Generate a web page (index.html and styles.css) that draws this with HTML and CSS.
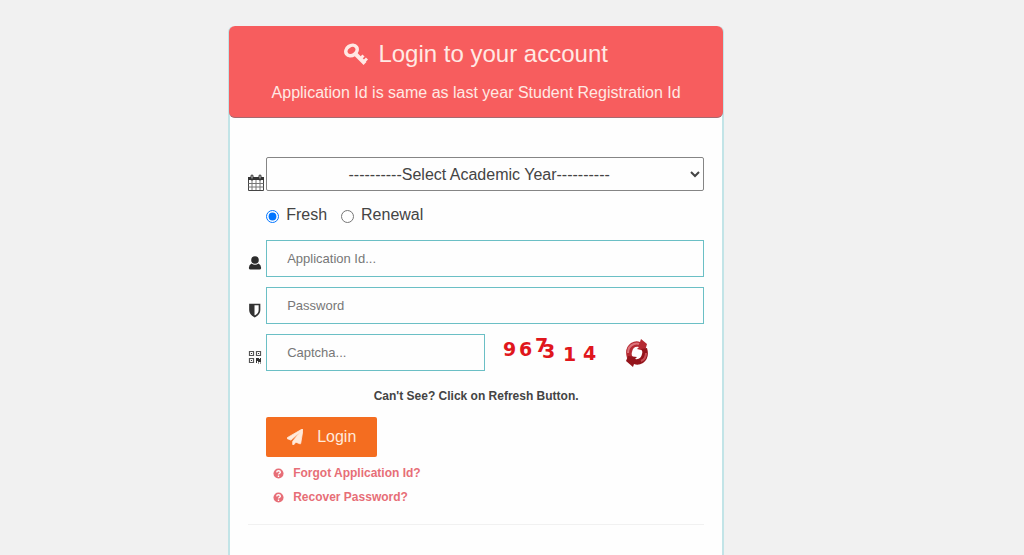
FILE: index.html
```html
<!DOCTYPE html>
<html lang="en">
<head>
<meta charset="utf-8">
<meta name="viewport" content="width=device-width, initial-scale=1">
<title>Login to your account</title>
<link rel="stylesheet" href="styles.css">
</head>
<body>
<main class="page">
  <section class="card">
    <header class="card-head">
      <h1 class="title">
        <svg class="icon-key" viewBox="0 0 24 22" aria-hidden="true"><g fill="none" stroke="currentColor"><ellipse cx="7.5" cy="7.5" rx="6" ry="4.800" stroke-width="3.600" transform="rotate(-35 7.5 7.5)"/><path d="M11 10.500L21 20.500" stroke-width="4"/><path d="M16 16L19.500 12.500M19.500 19L23 15.500" stroke-width="3"/></g></svg>
        Login to your account
      </h1>
      <p class="subtitle">Application Id is same as last year Student Registration Id</p>
    </header>
    <form class="form">
      <div class="row">
        <svg class="icon-calendar" viewBox="0 0 16 17" aria-hidden="true"><path d="M.5 3.500h15V16.500H.5z" fill="#fff" stroke="#444"/><path d="M0 3h16v3H0z" fill="#333"/><path d="M.5 9.500h15M.5 13h15M4 6v10M8 6v10M12 6v10" stroke="#777" fill="none"/><path d="M4 2v3M12 2v3" stroke="#333" stroke-width="3" stroke-linecap="round"/><path d="M4 1.500v3M12 1.500v3" stroke="#ccc"/></svg>
        <select class="select" aria-label="Academic year"><option>----------Select Academic Year----------</option></select>
      </div>
      <div class="radios">
        <label class="radio"><input type="radio" name="kind" checked>Fresh</label>
        <label class="radio"><input type="radio" name="kind">Renewal</label>
      </div>
      <div class="row">
        <svg class="icon" viewBox="0 0 14 16" aria-hidden="true"><circle cx="7" cy="5" r="3.800" fill="#2c2c2c"/><path d="M3.500 8.500Q7 11 10.500 8.500Q13 9.500 13.200 13Q13 14.500 11.500 14.500H2.500Q1 14.500 .8 13Q1 9.500 3.500 8.500z" fill="#2c2c2c"/></svg>
        <input class="field" type="text" aria-label="Application Id" placeholder="Application Id...">
      </div>
      <div class="row">
        <svg class="icon" viewBox="0 0 14 16" aria-hidden="true"><path d="M2 2.500H11.500V8Q11.500 12 6.750 14.500Q2 12 2 8z" fill="#fff" stroke="#333" stroke-width="1.700"/><path d="M2 2.500H6.500V14.500Q2 12 2 8z" fill="#333"/></svg>
        <input class="field" type="password" aria-label="Password" placeholder="Password">
      </div>
      <div class="row">
        <svg class="icon" viewBox="0 0 14 16" aria-hidden="true"><path d="M1.500 2.500h4v4h-4zM8.500 2.500h4v4h-4zM1.500 9.500h4v4h-4z" fill="#fff" stroke="#555" stroke-width="1.200"/><path d="M3 4h1v1H3zM10 4h1v1h-1zM3 11h1v1H3zM8 9h3v1h1V9h1v4h-3v-1H9v2H8zM10 13.500h1v1h-1zM12 13.500h1v1h-1z" fill="#333"/></svg>
        <div class="captcha">
          <input class="field" type="text" aria-label="Captcha" placeholder="Captcha...">
          <svg class="digits" viewBox="0 0 96 30" role="img" aria-label="Captcha code"><text x="0" y="18">9</text><text x="16" y="18">6</text><text x="32" y="14">7</text><text x="39" y="20">3</text><text x="60" y="23">1</text><text x="80" y="22">4</text></svg>
          <button class="refresh" type="button" aria-label="Refresh captcha">
            <svg viewBox="0 0 24 28" aria-hidden="true"><path d="M2 19Q-1 9 6 4Q11 1 15 3L16 0L22 5L20 12L12 10L14 8Q8 7 7 13Q6 16 8 18Z" fill="#b52a32"/><path d="M22 9Q25 19 18 24Q13 27 9 25L8 28L1 22L3 17L12 18L10 20Q16 21 17 15Q18 12 16 10Z" fill="#94141b"/><path d="M3 14Q3 7 9 5Q12 4 14 5" fill="none" stroke="#dc747b" stroke-width="2"/><path d="M21 14Q21 20 16 22" fill="none" stroke="#c94e56" stroke-width="2"/></svg>
          </button>
        </div>
      </div>
      <p class="hint">Can't See? Click on Refresh Button.</p>
      <button class="login" type="submit">
        <svg class="icon-plane" viewBox="0 0 1792 1792" aria-hidden="true"><path fill="currentColor" stroke="currentColor" stroke-width="90" d="M1764 11q33 24 27 64l-256 1536q-5 29-32 45-14 8-31 8-11 0-24-5l-453-185-242 295q-18 23-49 23-13 0-22-4-19-7-30.500-23.500t-11.500-36.500v-349l864-1059-1069 925-395-162q-37-14-40-55-2-40 32-59l1664-960q15-9 32-9 20 0 36 11z"/></svg>
        Login
      </button>
      <nav class="links">
        <a class="link" href="#"><svg class="icon-help" viewBox="0 0 12 12" aria-hidden="true"><circle cx="6" cy="6" r="5.500" fill="currentColor"/><path d="M4 4.700Q4.200 3 6 3Q8 3 8 4.600Q8 5.400 6.900 6Q6 6.500 6 7.200M6 8.200V9.700" fill="none" stroke="#fff" stroke-width="1.500"/></svg>Forgot Application Id?</a>
        <a class="link" href="#"><svg class="icon-help" viewBox="0 0 12 12" aria-hidden="true"><circle cx="6" cy="6" r="5.500" fill="currentColor"/><path d="M4 4.700Q4.200 3 6 3Q8 3 8 4.600Q8 5.400 6.900 6Q6 6.500 6 7.200M6 8.200V9.700" fill="none" stroke="#fff" stroke-width="1.500"/></svg>Recover Password?</a>
      </nav>
      <hr class="rule">
    </form>
  </section>
</main>
</body>
</html>
```
FILE: styles.css
```css
* { box-sizing: border-box; }
body {
  margin: 0;
  background: #f1f1f1;
  color: #444;
  font-family: "Liberation Sans", Arial, sans-serif;
  font-size: 16px;
}
.page {
  display: flex;
  justify-content: center;
  min-height: 100vh;
  padding: 26px 7% 0 0;
}
.card {
  width: 100%;
  max-width: 496px;
  background: #fefefe;
  border: 2px solid #c2e4e7;
  border-width: 0 2px;
  border-radius: 6px 6px 0 0;
}
.card-head {
  margin: 0 -1px;
  padding: 12px 16px 14px;
  background: #f75d5e;
  border-bottom: 1px solid #a56a70;
  border-radius: 6px;
  color: #ffe9e4;
  text-align: center;
}
.title {
  display: flex;
  align-items: center;
  justify-content: center;
  gap: 10px;
  margin: 0;
  font-size: 24px;
  font-weight: 400;
  line-height: 32px;
}
.icon-key { width: 24px; height: 22px; }
.subtitle { margin: 12px 0 0; line-height: 21px; }
.form { padding: 39px 18px 30px; }
.row {
  display: grid;
  grid-template-columns: 16px 1fr;
  align-items: end;
  gap: 2px;
  margin-bottom: 10px;
}
.icon { width: 14px; height: 16px; margin-bottom: 6px; }
.icon-calendar { width: 16px; height: 17px; }
.select {
  width: 100%;
  height: 34px;
  border: 1px solid #858585;
  border-radius: 2px;
  background: #fefefe;
  color: #444;
  font: inherit;
  text-align: center;
  text-align-last: center;
}
.radios {
  display: flex;
  gap: 14px;
  margin: 0 0 11px 18px;
  line-height: 28px;
}
.radio { display: flex; align-items: center; gap: 7px; }
.radio input { margin: 3px 0 0; width: 13px; height: 13px; }
.field {
  width: 100%;
  min-width: 0;
  height: 37px;
  padding: 0 20px;
  border: 1px solid #6bbfc5;
  border-radius: 0;
  background: #fefefe;
  color: #444;
  font-family: inherit;
  font-size: 13px;
}
.field::placeholder { color: #777; }
.captcha {
  display: grid;
  grid-template-columns: 50% 96px 24px;
  align-items: center;
}
.digits {
  width: 96px;
  height: 30px;
  margin-left: 18px;
  fill: #e0161c;
  font: bold 19px "DejaVu Sans", sans-serif;
}
.refresh {
  width: 24px;
  height: 28px;
  margin-left: 44px;
  padding: 0;
  border: 0;
  background: none;
}
.refresh svg { display: block; width: 24px; height: 28px; }
.hint {
  margin: 17px 0 13px;
  font-size: 12px;
  font-weight: 700;
  line-height: 16px;
  text-align: center;
}
.login {
  display: flex;
  align-items: center;
  gap: 14px;
  height: 40px;
  margin-left: 18px;
  padding: 0 21px;
  border: 0;
  border-radius: 2px;
  background: #f46d20;
  color: #ffeadb;
  font: inherit;
}
.icon-plane { width: 16px; height: 16px; }
.links {
  display: flex;
  flex-direction: column;
  align-items: flex-start;
  margin: 4px 0 15px 25px;
}
.link {
  display: flex;
  align-items: center;
  gap: 9px;
  color: #e76e77;
  font-size: 12px;
  font-weight: 700;
  line-height: 24px;
  text-decoration: none;
}
.icon-help { width: 11px; height: 11px; }
.rule { margin: 0; border: 0; border-top: 1px solid #f1f1f1; }
```
